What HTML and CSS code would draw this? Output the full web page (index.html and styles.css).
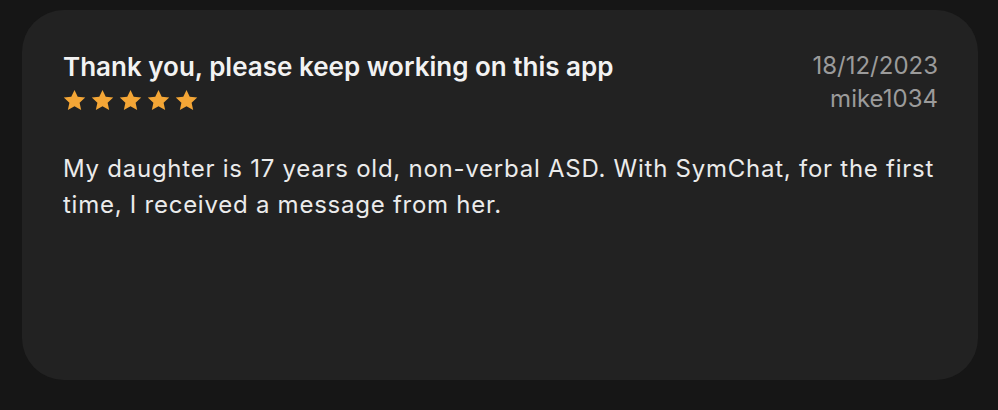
FILE: index.html
```html
<!DOCTYPE html>
<html>
<head>
<meta charset="utf-8">
<link rel="stylesheet" href="styles.css">
</head>
<body>
<div class="page">
  <div class="card">
    <div class="head">
      <div class="left">
        <div class="title">Thank you, please keep working on this app</div>
        <div class="stars">
          <svg viewBox="0 0 24 24"><path d="M12 1.8l3.1 6.6 7.2.8-5.4 4.9 1.5 7.1L12 17.6l-6.4 3.6 1.5-7.1-5.4-4.9 7.2-.8z"/></svg>
          <svg viewBox="0 0 24 24"><path d="M12 1.8l3.1 6.6 7.2.8-5.4 4.9 1.5 7.1L12 17.6l-6.4 3.6 1.5-7.1-5.4-4.9 7.2-.8z"/></svg>
          <svg viewBox="0 0 24 24"><path d="M12 1.8l3.1 6.6 7.2.8-5.4 4.9 1.5 7.1L12 17.6l-6.4 3.6 1.5-7.1-5.4-4.9 7.2-.8z"/></svg>
          <svg viewBox="0 0 24 24"><path d="M12 1.8l3.1 6.6 7.2.8-5.4 4.9 1.5 7.1L12 17.6l-6.4 3.6 1.5-7.1-5.4-4.9 7.2-.8z"/></svg>
          <svg viewBox="0 0 24 24"><path d="M12 1.8l3.1 6.6 7.2.8-5.4 4.9 1.5 7.1L12 17.6l-6.4 3.6 1.5-7.1-5.4-4.9 7.2-.8z"/></svg>
        </div>
      </div>
      <div class="meta">
        <div>18/12/2023</div>
        <div>mike1034</div>
      </div>
    </div>
    <p class="body">My daughter is 17 years old, non-verbal ASD. With SymChat, for the first time, I received a message from her.</p>
  </div>
</div>
</body>
</html>
```
FILE: styles.css
```css
html, body {
  margin: 0;
  padding: 0;
  background: #161616;
}
body {
  width: 998px;
  height: 410px;
  font-family: Inter, "Noto Sans", sans-serif;
}
.page {
  padding: 10px 20px 30px 22px;
}
.card {
  box-sizing: border-box;
  height: 370px;
  background: #222222;
  border-radius: 42px;
  padding: 41px 40px 0 41px;
}
.head {
  display: flex;
  justify-content: space-between;
  align-items: flex-start;
}
.title {
  color: #f2f2f2;
  font-size: 26px;
  font-weight: 600;
  line-height: 32px;
}
.stars {
  display: flex;
  gap: 3px;
  margin-top: 5px;
  margin-left: -1px;
}
.stars svg {
  width: 25px;
  height: 25px;
  fill: #f4a636;
}
.meta {
  margin-top: -2px;
  text-align: right;
  color: #9b9b9b;
  font-size: 24px;
  line-height: 33px;
}
.body {
  margin: 36px 0 0;
  color: #ebebeb;
  font-size: 24px;
  line-height: 36px;
  letter-spacing: 0.75px;
}
```
